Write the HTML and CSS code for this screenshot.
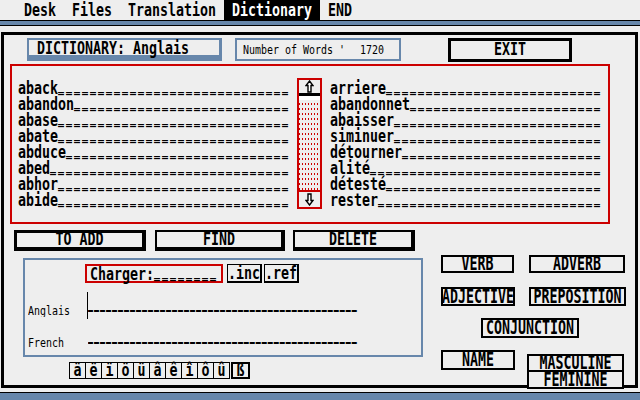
FILE: index.html
```html
<!DOCTYPE html>
<html lang="fr">
<head>
    <meta charset="UTF-8">
    <title>Dictionary</title>
    <link rel="stylesheet" href="styles.css">
</head>
<body>
    <header class="menubar">
        <span class="menu"><span class="sys">Desk</span></span>
        <span class="menu"><span class="sys">Files</span></span>
        <span class="menu"><span class="sys">Translation</span></span>
        <span class="menu active"><span class="sys">Dictionary</span></span>
        <span class="menu"><span class="sys">END</span></span>
    </header>
    <div class="stripe"></div>

    <main class="window">
        <div class="top">
            <div class="title"><span class="sys">DICTIONARY: Anglais</span></div>
            <div class="count"><span class="small">Number of Words '</span><span class="small num">1720</span></div>
            <div class="exit"><span class="sys">EXIT</span></div>
        </div>

        <div class="list">
            <div class="col">
                <div class="row"><span class="sys">aback<span class="fill">_____________________________</span></span></div>
                <div class="row"><span class="sys">abandon<span class="fill">___________________________</span></span></div>
                <div class="row"><span class="sys">abase<span class="fill">_____________________________</span></span></div>
                <div class="row"><span class="sys">abate<span class="fill">_____________________________</span></span></div>
                <div class="row"><span class="sys">abduce<span class="fill">____________________________</span></span></div>
                <div class="row"><span class="sys">abed<span class="fill">______________________________</span></span></div>
                <div class="row"><span class="sys">abhor<span class="fill">_____________________________</span></span></div>
                <div class="row"><span class="sys">abide<span class="fill">_____________________________</span></span></div>
            </div>
            <div class="scroll">
                <div class="arrow">
                    <svg width="9" height="13" viewBox="0 0 9 13"><path d="M4.5 1 L8 5.5 L6 5.5 L6 12 L3 12 L3 5.5 L1 5.5 Z" fill="#fff" stroke="#000" stroke-width="1.4"/></svg>
                </div>
                <div class="thumb"></div>
                <div class="track"></div>
                <div class="arrow down">
                    <svg width="9" height="13" viewBox="0 0 9 13"><path d="M4.5 12 L8 7.5 L6 7.5 L6 1 L3 1 L3 7.5 L1 7.5 Z" fill="#fff" stroke="#000" stroke-width="1.4"/></svg>
                </div>
            </div>
            <div class="col right">
                <div class="row"><span class="sys">arriere<span class="fill">___________________________</span></span></div>
                <div class="row"><span class="sys">abandonnet<span class="fill">________________________</span></span></div>
                <div class="row"><span class="sys">abaisser<span class="fill">__________________________</span></span></div>
                <div class="row"><span class="sys">siminuer<span class="fill">__________________________</span></span></div>
                <div class="row"><span class="sys">détourner<span class="fill">_________________________</span></span></div>
                <div class="row"><span class="sys">alité<span class="fill">_____________________________</span></span></div>
                <div class="row"><span class="sys">détesté<span class="fill">___________________________</span></span></div>
                <div class="row"><span class="sys">rester<span class="fill">____________________________</span></span></div>
            </div>
        </div>

        <div class="actions">
            <div class="btn to-add"><span class="sys">TO ADD</span></div>
            <div class="btn find"><span class="sys">FIND</span></div>
            <div class="btn delete"><span class="sys">DELETE</span></div>
        </div>

        <div class="lower">
            <div class="left">
                <div class="panel">
                    <div class="loader">
                        <div class="charger"><span class="sys">Charger:<span class="fill">________</span></span></div>
                        <div class="ext"><span class="sys">.inc</span></div>
                        <div class="ext"><span class="sys">.ref</span></div>
                    </div>
                    <div class="entry anglais">
                        <span class="label"><span class="small">Anglais</span></span>
                        <span class="field cursor"><span class="small dashes">_____________________________________________</span></span>
                    </div>
                    <div class="entry french">
                        <span class="label"><span class="small">French</span></span>
                        <span class="field"><span class="small dashes">_____________________________________________</span></span>
                    </div>
                </div>
                <div class="accents">
                    <span class="key"><span class="sys">ä</span></span>
                    <span class="key"><span class="sys">ë</span></span>
                    <span class="key"><span class="sys">ï</span></span>
                    <span class="key"><span class="sys">ö</span></span>
                    <span class="key"><span class="sys">ü</span></span>
                    <span class="key"><span class="sys">â</span></span>
                    <span class="key"><span class="sys">ê</span></span>
                    <span class="key"><span class="sys">î</span></span>
                    <span class="key"><span class="sys">ô</span></span>
                    <span class="key"><span class="sys">û</span></span>
                    <span class="key sharp"><span class="sys">ß</span></span>
                </div>
            </div>

            <div class="types">
                <div class="trow">
                    <div class="tbtn verb"><span class="sys">VERB</span></div>
                    <div class="tbtn adverb"><span class="sys">ADVERB</span></div>
                </div>
                <div class="trow second">
                    <div class="tbtn adjective"><span class="sys">ADJECTIVE</span></div>
                    <div class="tbtn preposition"><span class="sys">PREPOSITION</span></div>
                </div>
                <div class="trow third">
                    <div class="tbtn conjunction"><span class="sys">CONJUNCTION</span></div>
                </div>
                <div class="trow fourth">
                    <div class="tbtn name"><span class="sys">NAME</span></div>
                    <div class="gender">
                        <div class="tbtn masculine"><span class="sys">MASCULINE</span></div>
                        <div class="tbtn feminine"><span class="sys">FEMININE</span></div>
                    </div>
                </div>
            </div>
        </div>
    </main>

    <div class="taskbar"></div>
</body>
</html>
```

FILE: styles.css
```css
* {
    box-sizing: border-box;
}
body {
    margin: 0;
    width: 640px;
    height: 400px;
    overflow: hidden;
    background: #eeeeee;
    color: #000;
    font-family: "DejaVu Sans Mono", "Liberation Mono", monospace;
}

/* tall narrow system font, 8px per char */
.sys {
    display: inline-block;
    font-size: 13.29px;
    font-weight: bold;
    line-height: 12px;
    white-space: pre;
    transform: scaleY(1.3);
}
.small {
    display: inline-block;
    font-size: 9.97px;
    line-height: 10px;
    white-space: pre;
    transform: scaleY(1.2);
}
.fill {
    font-size: 9.97px;
    line-height: 0;
    letter-spacing: 2px;
    vertical-align: 3px;
    text-shadow: 0 1px 0 #000;
}

/* menu bar */
.menubar {
    display: flex;
    height: 20px;
    padding-left: 16px;
    line-height: 20px;
}
.menu {
    padding: 0 8px;
}
.menu.active {
    background: #000;
    color: #fff;
}
.stripe {
    height: 6px;
    background: #6787ab;
    border-top: 1px solid #000;
    border-bottom: 1px solid #000;
}
.taskbar {
    margin-top: 4px;
    height: 8px;
    background: #6787ab;
    border-top: 1px solid #000;
}

/* window */
.window {
    display: block;
    margin: 6px 2px 0 1px;
    height: 356px;
    border: 3px solid #000;
}
.top {
    display: flex;
    align-items: flex-start;
    height: 29px;
    padding-top: 3px;
}
.title {
    margin-left: 23px;
    width: 195px;
    height: 19px;
    padding-left: 8px;
    border: 2px solid #6787ab;
    border-right-width: 3px;
    box-shadow: 0 4px 0 #6787ab;
    line-height: 15px;
}
.count {
    margin-left: 13px;
    width: 166px;
    height: 23px;
    padding-left: 6px;
    border: 2px solid #6787ab;
    line-height: 19px;
    display: flex;
    align-items: center;
}
.count .num {
    margin-left: 15px;
}
.exit {
    margin-left: 47px;
    width: 124px;
    height: 24px;
    border: 3px solid #000;
    display: flex;
    justify-content: center;
    align-items: center;
}

/* word list */
.list {
    margin-left: 6px;
    width: 600px;
    height: 160px;
    border: 2px solid #cc0000;
    padding: 12px 0 0 6px;
    display: flex;
    align-items: flex-start;
}
.col {
    width: 272px;
    margin-top: 2px;
}
.col.right {
    margin-left: 8px;
}
.row {
    height: 16px;
    line-height: 16px;
    white-space: nowrap;
}
.scroll {
    margin-left: 7px;
    width: 25px;
    height: 131px;
    border: 2px solid #cc0000;
    display: flex;
    flex-direction: column;
}
.arrow {
    height: 13px;
    display: flex;
    justify-content: center;
    align-items: center;
}
.arrow.down {
    height: 17px;
    border-top: 2px solid #cc0000;
}
.thumb {
    height: 7px;
    background: #fff;
    border-top: 3px solid #000;
}
.track {
    flex: 1;
    background-color: #eeeeee;
    background-image: linear-gradient(#eeeeee 3px, transparent 3px), linear-gradient(90deg, #cc0000 1px, transparent 1px);
    background-size: 3px 5px;
}

/* action buttons */
.actions {
    display: flex;
    margin: 6px 0 0 10px;
}
.btn {
    height: 21px;
    border: 2px solid #000;
    border-right-width: 4px;
    border-bottom-width: 4px;
    display: flex;
    justify-content: center;
    align-items: center;
}
.btn.to-add {
    width: 132px;
    border-top-width: 3px;
    border-left-width: 3px;
}
.btn.find {
    width: 130px;
    margin-left: 9px;
}
.btn.delete {
    width: 122px;
    margin-left: 8px;
}

/* lower part */
.lower {
    display: flex;
    align-items: flex-start;
    margin-top: 4px;
}
.left {
    margin-left: 19px;
}
.panel {
    width: 400px;
    height: 99px;
    margin-top: 3px;
    padding: 4px 0 0 3px;
    border: 2px solid #6787ab;
}
.loader {
    display: flex;
    height: 19px;
    margin-left: 57px;
}
.charger {
    width: 138px;
    padding-left: 3px;
    border: 2px solid #cc0000;
    line-height: 15px;
}
.ext {
    width: 35px;
    margin-left: 4px;
    border: 1px solid #000;
    border-right-width: 2px;
    border-bottom-width: 2px;
    line-height: 16px;
}
.ext + .ext {
    margin-left: 2px;
}
.entry {
    display: flex;
    align-items: flex-end;
}
.entry.anglais {
    height: 27px;
    margin-top: 9px;
}
.entry.french {
    height: 20px;
    margin-top: 9px;
}
.label {
    width: 59px;
    line-height: 12px;
    padding-bottom: 3px;
}
.french .label {
    padding-bottom: 0;
}
.field {
    width: 271px;
    height: 100%;
    overflow: hidden;
    border-left: 1px solid transparent;
    display: flex;
    align-items: flex-end;
    line-height: 12px;
    padding-bottom: 10px;
}
.french .field {
    padding-bottom: 7px;
}
.field.cursor {
    border-left-color: #000;
}
.dashes {
    font-size: 8.3px;
    font-weight: bold;
    letter-spacing: 1px;
    text-shadow: 0 1px 0 #000;
}
.accents {
    display: flex;
    height: 17px;
    margin: 5px 0 0 46px;
}
.key {
    width: 17px;
    margin-left: -1px;
    border: 1px solid #000;
    display: flex;
    justify-content: center;
    align-items: center;
}
.key:first-child {
    margin-left: 0;
}
.key.sharp {
    width: 19px;
    margin-left: 1px;
    border-width: 2px;
}

/* word type buttons */
.types {
    margin-left: 18px;
    width: 185px;
}
.trow {
    display: flex;
    align-items: flex-start;
}
.trow.third,
.trow.fourth {
    margin-top: 12px;
}
.trow.second {
    margin-top: 14px;
}
.tbtn {
    height: 18px;
    border: 2px solid #000;
    background: #eeeeee;
    display: flex;
    justify-content: center;
    align-items: center;
    white-space: nowrap;
}
.tbtn .sys {
    line-height: 10px;
    transform: scaleY(1.5);
}
.verb {
    width: 73px;
}
.adverb {
    width: 96px;
    margin-left: 15px;
}
.adjective {
    width: 74px;
    height: 19px;
}
.preposition {
    width: 97px;
    height: 19px;
    margin-left: 14px;
}
.conjunction {
    width: 98px;
    height: 20px;
    margin-left: 40px;
}
.name {
    width: 74px;
    height: 20px;
}
.gender {
    margin: 4px 0 0 12px;
}
.masculine {
    width: 97px;
}
.feminine {
    width: 97px;
    height: 17px;
    border-top: 0;
}
```
